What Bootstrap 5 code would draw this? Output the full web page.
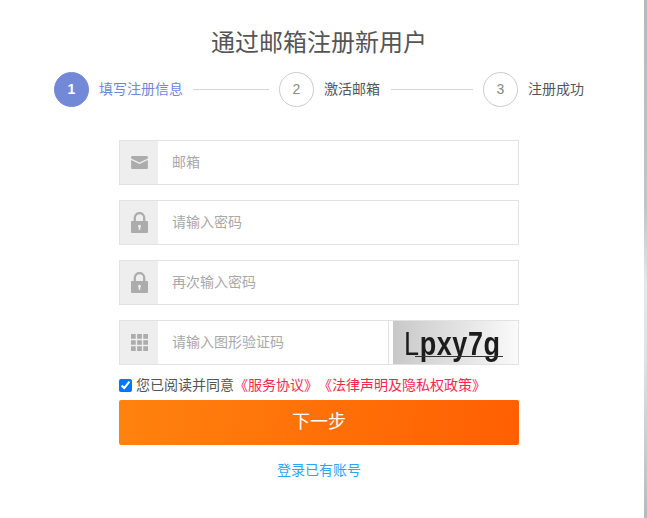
<!DOCTYPE html>
<html lang="zh-CN">
<head>
<meta charset="utf-8">
<title>注册</title>
<link href="https://cdn.jsdelivr.net/npm/bootstrap@5.3.0/dist/css/bootstrap.min.css" rel="stylesheet">
<style>
html,body{height:518px;overflow:hidden}
body{background:linear-gradient(180deg,#b4babd 0%,#c0c5c8 40%,#e6e8ea 55%,#dfe2e4 70%,#b4babd 100%);font-family:"Liberation Sans","Noto Sans CJK SC",sans-serif;font-size:14px;color:#555;text-spacing-trim:space-all}
.panel{width:644px;height:518px;background:#fff;padding-top:28px}
.ttl{font-size:24px;line-height:30px;color:#555;text-align:center;margin:0 0 14px -6px;font-weight:400}
.stepbar{padding-left:54px;height:35px;gap:10px}
.dot{width:35px;height:35px;border-radius:50%;border:1px solid #ccc;color:#888;flex:none;font-size:14px}
.dot-on{background:#7289d8;border-color:#7289d8;color:#fff;font-weight:700}
.lbl{color:#555;white-space:nowrap}
.lbl-on{color:#6f87d6}
.rule{height:1px;background:#d4d4d4;flex:none}
.r76{width:76px}.r82{width:82px;margin-left:1px}
.regform{width:400px;margin:33px 0 0 119px}
.fld{height:45px;margin-bottom:15px;flex-wrap:nowrap}
.fld .input-group-text{width:40px;padding:0;justify-content:center;background:#eee;border:1px solid #e2e2e2;border-radius:0}
.fld .form-control{border:1px solid #e2e2e2;border-left:0;border-radius:0;padding:0 14px 2px;font-size:14px;height:45px;box-shadow:none}
.fld .form-control::placeholder{color:#a8a8a8;opacity:1}
.capt-box{width:131px;flex:none;border:1px solid #e2e2e2;border-left:0;padding-left:5px;background:#fff}
.capt{height:43px;width:125px;background:linear-gradient(90deg,#c8c8c8,#fafafa);position:relative;overflow:hidden;filter:blur(.7px)}
.capt-txt{position:absolute;left:11px;top:8px;font-family:"Liberation Sans",sans-serif;font-weight:700;font-size:27px;line-height:30px;color:#1c1c1c;letter-spacing:.6px;white-space:nowrap;transform:scaleY(1.25);transform-origin:0 50%}
.capt-thin{font-weight:400}
.capt-line{position:absolute;left:22px;right:15px;top:35px;height:1px;background:#333}
.agree{margin-top:-6px;height:22px;gap:4px;white-space:nowrap;line-height:22px}
.agree input{width:13px;height:13px;margin:0;flex:none}
.agree a{color:#f8264f;text-decoration:none}
.cta{display:block;width:100%;height:45px;margin-top:4px;border:0;border-radius:2px;background:linear-gradient(100deg,#ff820e,#ff5f02);color:#fff;font-size:18px;padding:0}
.cta:hover,.cta:active{background:linear-gradient(100deg,#ff820e,#ff5f02);color:#fff}
.loginlink{color:#2aa5f5;text-decoration:none}
.linkwrap{margin-top:15px;line-height:20px}
</style>
</head>
<body>
<div class="panel">
  <h1 class="ttl">通过邮箱注册新用户</h1>
  <div class="d-flex align-items-center stepbar">
    <div class="dot dot-on d-flex align-items-center justify-content-center">1</div>
    <span class="lbl lbl-on">填写注册信息</span>
    <div class="rule r76"></div>
    <div class="dot d-flex align-items-center justify-content-center">2</div>
    <span class="lbl">激活邮箱</span>
    <div class="rule r82"></div>
    <div class="dot d-flex align-items-center justify-content-center">3</div>
    <span class="lbl">注册成功</span>
  </div>
  <form class="regform">
    <div class="input-group fld">
      <span class="input-group-text"><svg width="17" height="13" viewBox="0 0 18 14"><path fill="#acacac" d="M1 0h16a1 1 0 0 1 1 1v1.600L9 7 0 2.600V1a1 1 0 0 1 1-1zM0 4.200l9 4.400 9-4.400V13a1 1 0 0 1-1 1H1a1 1 0 0 1-1-1z"/></svg></span>
      <input class="form-control" placeholder="邮箱">
    </div>
    <div class="input-group fld">
      <span class="input-group-text"><svg width="17" height="21" viewBox="0 0 18 22"><path fill="none" stroke="#acacac" stroke-width="2.400" d="M4 10V6a5 5 0 0 1 10 0v4"/><path fill="#acacac" fill-rule="evenodd" d="M1 9.500h16a1 1 0 0 1 1 1V21a1 1 0 0 1-1 1H1a1 1 0 0 1-1-1V10.500a1 1 0 0 1 1-1zM9 13.500a1.500 1.500 0 0 0-.8 2.800V19h1.600v-2.700A1.500 1.500 0 0 0 9 13.500z"/></svg></span>
      <input class="form-control" type="text" placeholder="请输入密码">
    </div>
    <div class="input-group fld">
      <span class="input-group-text"><svg width="17" height="21" viewBox="0 0 18 22"><path fill="none" stroke="#acacac" stroke-width="2.400" d="M4 10V6a5 5 0 0 1 10 0v4"/><path fill="#acacac" fill-rule="evenodd" d="M1 9.500h16a1 1 0 0 1 1 1V21a1 1 0 0 1-1 1H1a1 1 0 0 1-1-1V10.500a1 1 0 0 1 1-1zM9 13.500a1.500 1.500 0 0 0-.8 2.800V19h1.600v-2.700A1.500 1.500 0 0 0 9 13.500z"/></svg></span>
      <input class="form-control" type="text" placeholder="再次输入密码">
    </div>
    <div class="input-group fld">
      <span class="input-group-text"><svg width="17" height="17" viewBox="0 0 18 18"><path fill="#acacac" d="M0 0h5v5H0zM6.500 0h5v5h-5zM13 0h5v5h-5zM0 6.500h5v5H0zM6.500 6.500h5v5h-5zM13 6.500h5v5h-5zM0 13h5v5H0zM6.500 13h5v5h-5zM13 13h5v5h-5z"/></svg></span>
      <input class="form-control" placeholder="请输入图形验证码">
      <div class="capt-box"><div class="capt"><span class="capt-txt"><span class="capt-thin">L</span>pxy7g</span><span class="capt-line"></span></div></div>
    </div>
    <div class="d-flex align-items-center agree">
      <input type="checkbox" checked>
      <span>您已阅读并同意<a href="#">《服务协议》</a><a href="#">《法律声明及隐私权政策》</a></span>
    </div>
    <button type="button" class="btn cta">下一步</button>
    <div class="text-center linkwrap"><a class="loginlink" href="#">登录已有账号</a></div>
  </form>
</div>
</body>
</html>
